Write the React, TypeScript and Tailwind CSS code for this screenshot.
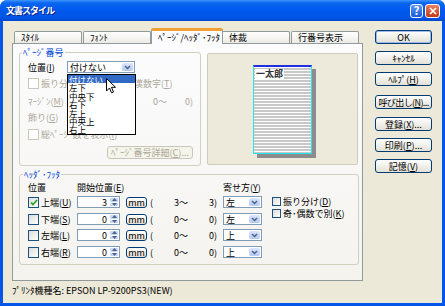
import React from 'react';

type Kids = { children?: React.ReactNode };

const U = ({ children }: Kids) => <span className="underline underline-offset-[1px]">{children}</span>;

const XpButton = ({
  children,
  className = '',
  primary = false,
  disabled = false,
}: Kids & { className?: string; primary?: boolean; disabled?: boolean }) => (
  <div
    className={`flex items-center justify-center whitespace-nowrap rounded-[3px] border leading-none ${
      disabled ? 'border-[#C9C7BA] text-[#ACA899] bg-[#F5F4EA]' : 'border-[#003C74] text-black bg-linear-to-b from-white to-[#E3E1D6]'
    } ${primary ? 'shadow-[inset_0_0_0_1px_#9DB9EB]' : ''} ${className}`}
  >
    {children}
  </div>
);

const Check = ({ checked = false, disabled = false, size = 'h-[11px] w-[11px]' }: { checked?: boolean; disabled?: boolean; size?: string }) => (
  <span
    className={`flex shrink-0 items-center justify-center border ${size} ${
      disabled ? 'border-[#CAC8BB] bg-white' : 'border-[#1C5180] bg-linear-to-br from-[#DCDCD7] to-white'
    }`}
  >
    {checked && (
      <svg width="8" height="7" viewBox="0 0 8 7">
        <path d="M1 3.5l2 2L7 1" stroke="#21A121" strokeWidth="1.6" fill="none" />
      </svg>
    )}
  </span>
);

const Arrow = () => (
  <span className="m-px flex w-[11px] items-center justify-center rounded-[2px] bg-linear-to-b from-[#DCE6FD] to-[#B3C8F5]">
    <svg width="7" height="5" viewBox="0 0 7 5">
      <path d="M1 1l2.5 2.5L6 1" stroke="#4D6185" strokeWidth="1.5" fill="none" />
    </svg>
  </span>
);

const Combo = ({ value, className = '' }: { value: string; className?: string }) => (
  <div className={`flex h-[12px] items-stretch border border-[#7F9DB9] bg-white ${className}`}>
    <span className="flex flex-1 items-center pl-[2px] leading-none">{value}</span>
    <Arrow />
  </div>
);

const Spin = ({ value }: { value: string }) => (
  <div className="flex h-[12px] w-[43px] items-stretch border border-[#7F9DB9] bg-white">
    <span className="flex flex-1 items-center justify-end pr-[2px] leading-none">{value}</span>
    <span className="flex w-[10px] flex-col gap-px p-px">
      <span className="flex flex-1 items-center justify-center rounded-[1px] bg-[#C6D5F8]">
        <svg width="5" height="3" viewBox="0 0 5 3"><path d="M0 3L2.5 0 5 3z" fill="#4D6185" /></svg>
      </span>
      <span className="flex flex-1 items-center justify-center rounded-[1px] bg-[#C6D5F8]">
        <svg width="5" height="3" viewBox="0 0 5 3"><path d="M0 0h5L2.5 3z" fill="#4D6185" /></svg>
      </span>
    </span>
  </div>
);

const rows = [
  { label: '上端', key: 'U', on: true, from: '3', to: '3)', align: '左' },
  { label: '下端', key: 'S', on: false, from: '0', to: '0)', align: '左' },
  { label: '左端', key: 'L', on: false, from: '0', to: '0)', align: '上' },
  { label: '右端', key: 'R', on: false, from: '0', to: '0)', align: '上' },
];

const listItems = ['付けない', '左下', '中央下', '右下', '左上', '中央上', '右上'];

const tabs = ['ｽﾀｲﾙ', 'ﾌｫﾝﾄ', 'ﾍﾟｰｼﾞ/ﾍｯﾀﾞ･ﾌｯﾀ', '体裁', '行番号表示'];

export default function App() {
  return (
    <div className="h-[306px] w-[445px] overflow-hidden bg-white font-['Noto_Sans_CJK_JP',sans-serif] text-[9px] text-black">
      <div className="flex h-full w-full flex-col rounded-t-[7px] bg-[#0556E8]">
        {/* title bar */}
        <div className="flex h-[21px] shrink-0 items-center rounded-t-[7px] bg-[linear-gradient(to_bottom,#3D95FF_0%,#0A66F0_14%,#0058EE_50%,#0055E6_86%,#0046C8_100%)] pl-[6px] pr-[5px]">
          <span className="flex-1 text-[9px] font-bold leading-none tracking-[-1px] text-white [text-shadow:1px_1px_0_#0A1E80]">
            文書スタイル
          </span>
          <div className="flex gap-[2px]">
            <span className="flex h-[14px] w-[13px] items-center justify-center rounded-[3px] border border-white bg-linear-to-b from-[#5C99F7] to-[#1A57DF] text-[11px] font-bold leading-none text-white">
              ?
            </span>
            <span className="flex h-[14px] w-[15px] items-center justify-center rounded-[3px] border border-white bg-linear-to-b from-[#E9805F] to-[#C43812]">
              <svg width="8" height="8" viewBox="0 0 8 8">
                <path d="M1 1l6 6M7 1L1 7" stroke="white" strokeWidth="1.7" />
              </svg>
            </span>
          </div>
        </div>

        {/* body */}
        <div className="mx-[3px] mb-[3px] flex flex-1 flex-col bg-[#ECE9D8]">
          <div className="flex pl-[9px] pt-[7px]">
            <div className="w-[351px]">
              <div className="flex h-[15px] items-end pl-[2px]">
                {tabs.map((t, i) =>
                  i === 2 ? (
                    <div
                      key={t}
                      className="relative z-10 -mb-px -mx-px flex h-[16px] w-[72px] items-start rounded-t-[2px] border-x border-[#919B9C] border-t-[3px] border-t-[#F0A030] bg-[#FCFCFE] pl-[6px] pt-[2px] leading-none"
                    >
                      {t}
                    </div>
                  ) : (
                    <div
                      key={t}
                      className="mr-px flex h-[12px] w-[68px] items-center rounded-t-[2px] border-x border-t border-[#919B9C] bg-linear-to-b from-white to-[#ECEBE6] pl-[6px] leading-none"
                    >
                      {t}
                    </div>
                  )
                )}
              </div>

              {/* tab panel */}
              <div className="h-[238px] border border-[#919B9C] bg-linear-to-b from-[#FCFCFE] to-[#F4F3EE]">
                <div className="ml-[6px] mt-[4px] flex">
                  <fieldset className="h-[118px] w-[182px] rounded-[3px] border border-[#D0D0BF]">
                    <legend className="ml-[2px] px-px leading-none text-[#0046D5]">ﾍﾟｰｼﾞ番号</legend>
                    <div className="pl-[8px] pt-[4px]">
                      <div className="relative flex h-[12px] items-center">
                        <span className="w-[39px] leading-none">
                          位置(<U>I</U>)
                        </span>
                        <Combo value="付けない" className="w-[68px]" />
                        <div className="absolute left-[39px] top-[13px] z-20 h-[61px] w-[69px] border border-black bg-white text-[8.5px]">
                          {listItems.map((it, i) => (
                            <div
                              key={it}
                              className={`h-[8.4px] pl-[1px] leading-[8.4px] ${i === 0 ? 'bg-[#316AC5] text-white' : ''}`}
                            >
                              {it}
                            </div>
                          ))}
                        </div>
                        <svg className="absolute left-[78px] top-[17px] z-30" width="10" height="16" viewBox="0 0 10 16">
                          <path d="M0.5 0.5v12.5l3-3 2 4.8 2-0.8-2-4.7h4z" fill="white" stroke="black" strokeWidth="1" />
                        </svg>
                      </div>
                      <div className="mt-[5px] flex h-[11px] items-center text-[#ACA899]">
                        <Check disabled />
                        <span className="ml-[2px] w-[26px] whitespace-nowrap leading-none">振り分</span>
                        <span className="ml-[67px] whitespace-nowrap leading-none">漢数字(<U>T</U>)</span>
                      </div>
                      <div className="mt-[6px] flex h-[12px] items-center text-[#ACA899]">
                        <span className="w-[39px] leading-none">
                          ﾏｰｼﾞﾝ(<U>M</U>)
                        </span>
                        <span className="h-[12px] w-[68px] border border-[#C9C7BA] bg-[#F5F4EA]" />
                        <span className="ml-[18px] w-[32px] leading-none">0〜</span>
                        <span className="leading-none">0)</span>
                      </div>
                      <div className="mt-[5px] flex h-[11px] items-center text-[#ACA899]">
                        <span className="w-[39px] leading-none">
                          飾り(<U>G</U>)
                        </span>
                      </div>
                      <div className="mt-[6px] flex h-[11px] items-center text-[#ACA899]">
                        <Check disabled />
                        <span className="ml-[2px] leading-none">総ﾍﾟｰｼﾞ数を表示(<U>I</U>)</span>
                      </div>
                      <XpButton disabled className="ml-[79px] mt-[6px] h-[13px] w-[86px]">
                        ﾍﾟｰｼﾞ番号詳細(<U>C</U>)...
                      </XpButton>
                    </div>
                  </fieldset>

                  <div className="ml-[6px] mt-[5px] flex h-[112px] w-[151px] items-center justify-center rounded-[2px] border border-[#CFCCBC] bg-[#EDEADB]">
                    <div className="relative h-[89px] w-[59px] border-x border-b border-t-2 border-x-[#22E6F0] border-b-[#22E6F0] border-t-[#2030E0] bg-[repeating-linear-gradient(to_bottom,#ffffff_0px,#ffffff_1px,#C8C8C8_1px,#C8C8C8_3px)] shadow-[4px_4px_0_#8C8C8C]">
                      <span className="ml-[1px] mt-[1px] inline-block bg-white px-px text-[9px] font-bold leading-[10px] text-[#333]">
                        一太郎
                      </span>
                    </div>
                  </div>
                </div>

                <fieldset className="ml-[6px] mt-[4px] h-[95px] w-[340px] rounded-[3px] border border-[#D0D0BF]">
                  <legend className="ml-[3px] px-px leading-none text-[#0046D5]">ﾍｯﾀﾞ･ﾌｯﾀ</legend>
                  <div className="flex pl-[8px] pt-[4px]">
                    <div>
                      <div className="flex h-[9px] items-center leading-none">
                        <span className="w-[49px]">位置</span>
                        <span className="w-[146px]">
                          開始位置(<U>E</U>)
                        </span>
                        <span>
                          寄せ方(<U>Y</U>)
                        </span>
                      </div>
                      {rows.map((r, i) => (
                        <div
                          key={r.label}
                          className={`flex h-[12px] items-center leading-none ${i === 0 ? 'mt-[4px]' : i === 2 ? 'mt-[4px]' : 'mt-[5px]'}`}
                        >
                          <span className="flex w-[49px] items-center">
                            <Check checked={r.on} />
                            <span className="ml-[2px]">
                              {r.label}(<U>{r.key}</U>)
                            </span>
                          </span>
                          <Spin value={r.from} />
                          <XpButton className="ml-[6px] h-[11px] w-[21px]">mm</XpButton>
                          <span className="ml-[3px] w-[24px]">(</span>
                          <span className="w-[35px]">{r.from}〜</span>
                          <span className="w-[14px]">{r.to}</span>
                          <Combo value={r.align} className="w-[39px]" />
                        </div>
                      ))}
                    </div>
                    <div className="ml-[10px] pt-[14px] leading-none">
                      <div className="flex h-[9px] items-center">
                        <Check size="h-[9px] w-[9px]" />
                        <span className="ml-[2px]">
                          振り分け(<U>D</U>)
                        </span>
                      </div>
                      <div className="mt-[3px] flex h-[9px] items-center">
                        <Check size="h-[9px] w-[9px]" />
                        <span className="ml-[2px]">
                          奇･偶数で別(<U>K</U>)
                        </span>
                      </div>
                    </div>
                  </div>
                </fieldset>
              </div>
            </div>

            {/* right buttons */}
            <div className="ml-[12px] flex w-[57px] flex-col pt-[2px]">
              <XpButton primary className="h-[14px]">OK</XpButton>
              <XpButton className="mt-[7px] h-[14px]">ｷｬﾝｾﾙ</XpButton>
              <XpButton className="mt-[7px] h-[14px]">
                ﾍﾙﾌﾟ(<U>H</U>)
              </XpButton>
              <XpButton className="mt-[9px] h-[14px] tracking-[-0.6px]">
                呼び出し(<U>N</U>)...
              </XpButton>
              <XpButton className="mt-[8px] h-[14px]">
                登録(<U>X</U>)...
              </XpButton>
              <XpButton className="mt-[7px] h-[14px]">
                印刷(<U>P</U>)...
              </XpButton>
              <XpButton className="mt-[7px] h-[14px]">
                記憶(<U>V</U>)
              </XpButton>
            </div>
          </div>

          <div className="mt-[5px] pl-[9px] leading-none">ﾌﾟﾘﾝﾀ機種名: EPSON LP-9200PS3(NEW)</div>
        </div>
      </div>
    </div>
  );
}
